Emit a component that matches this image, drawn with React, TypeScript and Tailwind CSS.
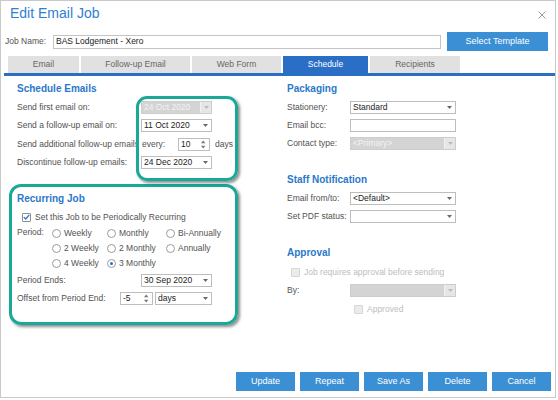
import React from 'react';

function Caret({ color = '#6a6a6a' }: { color?: string }) {
  return (
    <svg width="5" height="3" viewBox="0 0 5 3">
      <path d="M0 0h5L2.5 3z" fill={color} />
    </svg>
  );
}

function Select({ value = '', w, disabled = false }: { value?: string; w: string; disabled?: boolean }) {
  if (disabled) {
    return (
      <div className={`flex h-[13px] ${w} border border-[#cdcdcd] bg-[#d4d4d4]`}>
        <span className="flex-1 pl-[2px] leading-[11px] text-[#f3f3f3] whitespace-nowrap overflow-hidden">{value}</span>
        <span className="flex w-[11px] items-center justify-center border-l border-[#f2f2f2] bg-[#e6e6e6]">
          <Caret color="#bcbcbc" />
        </span>
      </div>
    );
  }
  return (
    <div className={`flex h-[13px] ${w} items-center border border-[#bdbdbd] bg-white`}>
      <span className="flex-1 pl-[2px] leading-[11px] text-[#222] whitespace-nowrap overflow-hidden">{value}</span>
      <span className="flex w-[11px] items-center justify-center">
        <Caret />
      </span>
    </div>
  );
}

function Spinner({ value, w }: { value: string; w: string }) {
  return (
    <div className={`flex h-[13px] ${w} items-center border border-[#bdbdbd] bg-white`}>
      <span className="flex-1 pl-[2px] leading-[11px] text-[#222]">{value}</span>
      <svg width="5" height="9" viewBox="0 0 5 9" className="mr-[3px]">
        <path d="M0 3.2h4.4L2.2 0.6z" fill="#777" />
        <path d="M0 5.8h4.4L2.2 8.4z" fill="#777" />
      </svg>
    </div>
  );
}

function Radio({ checked = false }: { checked?: boolean }) {
  return (
    <span className="flex h-[9px] w-[9px] items-center justify-center rounded-full border border-[#9c9c9c] bg-white">
      {checked && <span className="h-[3px] w-[3px] rounded-full bg-[#2c72cc]" />}
    </span>
  );
}

function Check({ checked = false, disabled = false }: { checked?: boolean; disabled?: boolean }) {
  return (
    <span
      className={`flex h-[9px] w-[9px] items-center justify-center rounded-[1px] border ${
        disabled ? 'border-[#d6d6d6] bg-[#ececec]' : 'border-[#8e8e8e] bg-white'
      }`}
    >
      {checked && (
        <svg width="7" height="6" viewBox="0 0 7 6">
          <path d="M0.8 3.1L2.7 5L6.3 0.8" stroke="#2c72cc" strokeWidth="1.3" fill="none" />
        </svg>
      )}
    </span>
  );
}

const tabs = [
  { label: 'Email', w: 'w-[71px]' },
  { label: 'Follow-up Email', w: 'w-[109px]' },
  { label: 'Web Form', w: 'w-[89px]' },
  { label: 'Schedule', w: 'w-[85px]', active: true },
  { label: 'Recipients', w: 'w-[90px]' },
];

const periods = [
  ['Weekly', 'Monthly', 'Bi-Annually'],
  ['2 Weekly', '2 Monthly', 'Annually'],
  ['4 Weekly', '3 Monthly', ''],
];

const heading = 'h-[12px] text-[10px] leading-[12px] font-bold text-[#2b78c9]';

export default function App() {
  return (
    <div className="h-[400px] w-[558px] bg-white font-['Liberation_Sans',Arial,sans-serif] text-[8.5px] text-[#525252]">
      <div className="flex h-[398px] w-[556px] flex-col border border-[#c9c9c9]">
        {/* title */}
        <div className="flex h-[31px] items-start justify-between pl-[9px] pr-[9px]">
          <span className="pt-[4px] text-[14px] leading-[16px] text-[#2f80d2]">Edit Email Job</span>
          <svg width="8" height="8" viewBox="0 0 8 8" className="mt-[10px]">
            <path d="M0.5 0.5L7.5 7.5M7.5 0.5L0.5 7.5" stroke="#9a9a9a" strokeWidth="1" />
          </svg>
        </div>

        {/* job name */}
        <div className="flex h-[19px] items-center pl-[4px]">
          <span className="w-[48px]">Job Name:</span>
          <div className="flex h-[14px] w-[388px] items-center border border-[#c4c4c4] pl-[2px] text-[#222]">
            BAS Lodgement - Xero
          </div>
          <button className="ml-[6px] h-[19px] w-[101px] bg-[#3a8fd5] text-[9px] text-white">Select Template</button>
        </div>

        {/* tabs */}
        <div className="mt-[5px] flex h-[17px] gap-[2px] pl-[7px]">
          {tabs.map((t) => (
            <div
              key={t.label}
              className={`flex ${t.w} items-center justify-center ${
                t.active ? 'bg-[#2b6ec6] text-white' : 'bg-[#e1e1e1] text-[#666]'
              }`}
            >
              {t.label}
            </div>
          ))}
        </div>
        <div className="ml-[3px] h-[3px] bg-[#2b6ec6]" />

        {/* content */}
        <div className="flex">
          {/* left column */}
          <div className="ml-[8px] w-[229px]">
            <div className="relative pl-[8px]">
              <div className={`mt-[7px] ${heading}`}>Schedule Emails</div>
              <div className="mt-[6px] flex h-[13px] items-center">
                <span className="w-[124px]">Send first email on:</span>
                <Select value="24 Oct 2020" w="w-[71px]" disabled />
              </div>
              <div className="mt-[5px] flex h-[13px] items-center">
                <span className="w-[124px]">Send a follow-up email on:</span>
                <Select value="11 Oct 2020" w="w-[71px]" />
              </div>
              <div className="mt-[6px] flex h-[13px] items-center">
                <span className="w-[124px] whitespace-nowrap">Send additional follow-up emails</span>
                <span className="ml-[1px] w-[36px]">every:</span>
                <Spinner value="10" w="w-[32px]" />
                <span className="ml-[5px]">days</span>
              </div>
              <div className="mt-[5px] flex h-[13px] items-center">
                <span className="w-[124px]">Discontinue follow-up emails:</span>
                <Select value="24 Dec 2020" w="w-[71px]" />
              </div>
              <div className="pointer-events-none absolute left-[127px] top-[13px] h-[85px] w-[102px] rounded-[11px] border-[3px] border-[#1aa898] shadow-[2px_2px_3px_rgba(0,0,0,0.45)]" />
            </div>

            <div className="mt-[15px] rounded-[12px] border-[3px] border-[#1aa898] pb-[17px] pl-[5px] pt-[6px] shadow-[2px_2px_3px_rgba(0,0,0,0.45)]">
              <div className={heading}>Recurring Job</div>
              <div className="mt-[6px] flex h-[12px] items-center pl-[5px]">
                <Check checked />
                <span className="ml-[4px]">Set this Job to be Periodically Recurring</span>
              </div>
              <div className="mt-[4px] flex">
                <span className="w-[35px] leading-[10px]">Period:</span>
                <div className="flex flex-col gap-[3px]">
                  {periods.map((row, i) => (
                    <div key={i} className="flex h-[12px] items-center">
                      {row.map((p, j) =>
                        p ? (
                          <div key={p} className={`flex items-center gap-[3px] ${j === 0 ? 'w-[55px]' : j === 1 ? 'w-[59px]' : ''}`}>
                            <Radio checked={p === '3 Monthly'} />
                            <span>{p}</span>
                          </div>
                        ) : null
                      )}
                    </div>
                  ))}
                </div>
              </div>
              <div className="mt-[5px] flex h-[13px] items-center">
                <span className="w-[124px]">Period Ends:</span>
                <Select value="30 Sep 2020" w="w-[71px]" />
              </div>
              <div className="mt-[5px] flex h-[13px] items-center">
                <span className="w-[103px]">Offset from Period End:</span>
                <Spinner value="-5" w="w-[33px]" />
                <span className="ml-[2px]">
                  <Select value="days" w="w-[57px]" />
                </span>
              </div>
            </div>
          </div>

          {/* right column */}
          <div className="ml-[49px] flex flex-col">
            <div className={`mt-[7px] ${heading}`}>Packaging</div>
            <div className="mt-[6px] flex h-[13px] items-center">
              <span className="w-[63px]">Stationery:</span>
              <Select value="Standard" w="w-[106px]" />
            </div>
            <div className="mt-[5px] flex h-[13px] items-center">
              <span className="w-[63px]">Email bcc:</span>
              <div className="h-[13px] w-[106px] border border-[#bdbdbd] bg-white" />
            </div>
            <div className="mt-[5px] flex h-[13px] items-center">
              <span className="w-[63px]">Contact type:</span>
              <Select value="<Primary>" w="w-[106px]" disabled />
            </div>

            <div className={`mt-[24px] ${heading}`}>Staff Notification</div>
            <div className="mt-[6px] flex h-[13px] items-center">
              <span className="w-[63px]">Email from/to:</span>
              <Select value="<Default>" w="w-[106px]" />
            </div>
            <div className="mt-[5px] flex h-[13px] items-center">
              <span className="w-[63px]">Set PDF status:</span>
              <Select w="w-[106px]" />
            </div>

            <div className={`mt-[24px] ${heading}`}>Approval</div>
            <div className="mt-[7px] flex h-[12px] items-center pl-[4px] text-[#bdbdbd]">
              <Check disabled />
              <span className="ml-[4px]">Job requires approval before sending</span>
            </div>
            <div className="mt-[6px] flex h-[13px] items-center">
              <span className="w-[63px]">By:</span>
              <Select w="w-[106px]" disabled />
            </div>
            <div className="mt-[6px] flex h-[12px] items-center pl-[67px] text-[#bdbdbd]">
              <Check disabled />
              <span className="ml-[4px]">Approved</span>
            </div>
          </div>
        </div>

        {/* footer buttons */}
        <div className="mb-[6px] mt-auto flex justify-end gap-[5px] pr-[4px]">
          {['Update', 'Repeat', 'Save As', 'Delete', 'Cancel'].map((b) => (
            <button key={b} className="h-[19px] w-[59px] bg-[#3a8fd5] text-[9px] text-white">
              {b}
            </button>
          ))}
        </div>
      </div>
    </div>
  );
}
